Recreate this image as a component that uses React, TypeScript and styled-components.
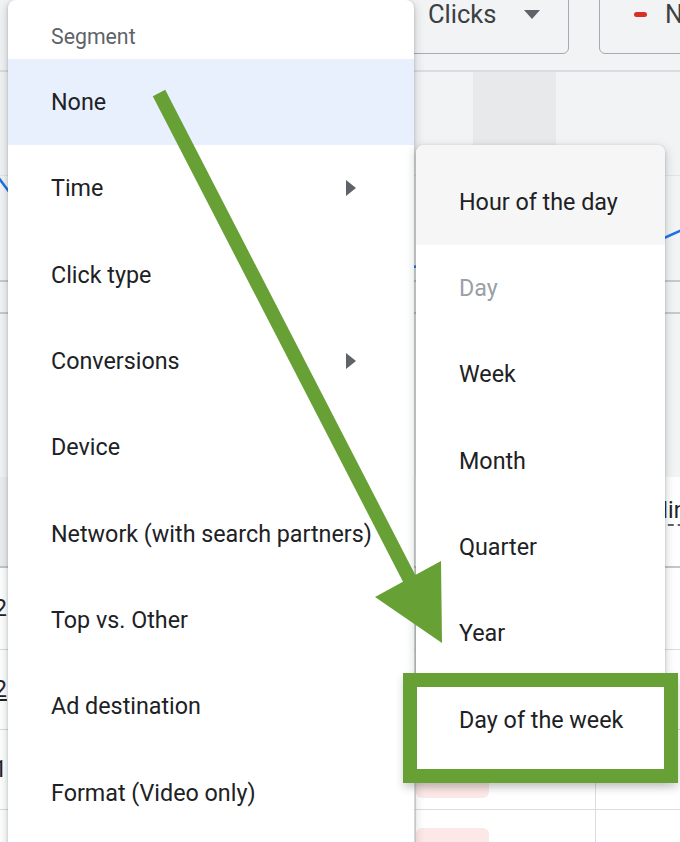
import styled, { createGlobalStyle } from 'styled-components';

const GlobalStyle = createGlobalStyle`
  html, body {
    margin: 0;
    padding: 0;
    background: #ffffff;
  }
  body {
    font-family: Roboto, "Liberation Sans", Arial, sans-serif;
    -webkit-font-smoothing: antialiased;
  }
`;

const GREEN = '#67a035';

const Page = styled.div`
  position: relative;
  width: 680px;
  height: 842px;
  overflow: hidden;
  background: #ffffff;
`;

/* ---------- dashboard behind the menus ---------- */

const Dashboard = styled.div`
  display: flex;
  flex-direction: column;
`;

const Toolbar = styled.div`
  height: 72px;
  box-sizing: border-box;
  background: #f1f3f4;
  border-bottom: 2px solid #dadce0;
  display: flex;
  align-items: flex-end;
  gap: 30px;
  padding: 0 0 16px 399px;
`;

const MetricButton = styled.div`
  flex: none;
  width: ${({ $width }: { $width: number }) => $width}px;
  height: 80px;
  box-sizing: border-box;
  border: 1px solid #a6abb0;
  border-radius: 6px;
  display: flex;
  align-items: center;
  gap: 28px;
  padding: 0 0 0 28px;
  color: #3c4043;
  font-size: 25.5px;
`;

const MetricDash = styled.span`
  width: 13px;
  height: 5px;
  border-radius: 3px;
  background: #d93025;
  margin-left: 6px;
  margin-right: -10px;
`;

const HoverBand = styled.div`
  height: 103px;
  background: #f1f3f4;
  display: flex;
  padding-left: 473px;
`;

const HoverColumn = styled.div`
  width: 83px;
  background: #e8e9eb;
`;

const Chart = styled.svg`
  display: block;
  width: 680px;
  height: 301px;
  background: #f3f4f5;
  border-top: 1px solid #e3e4e6;
`;

const Table = styled.div`
  display: grid;
  grid-template-columns: 415px 180px 1fr;
`;

const HeaderCell = styled.div`
  height: 91px;
  box-sizing: border-box;
  border-bottom: 2px solid #c4c7c9;
  background: ${({ $shaded }: { $shaded?: boolean }) => ($shaded ? '#eceef0' : '#ffffff')};
  display: flex;
  align-items: center;
  padding-bottom: 20px;
  font-size: 23px;
  color: #202124;
  overflow: hidden;
`;

const HeaderLabel = styled.span`
  margin-left: 53px;
  border-bottom: 2px dashed #5f6368;
  white-space: nowrap;
`;

const Cell = styled.div`
  height: ${({ $height }: { $height: number }) => $height}px;
  box-sizing: border-box;
  border-bottom: 1px solid #dadce0;
  border-left: ${({ $divider }: { $divider?: boolean }) => ($divider ? '1px solid #dadce0' : 'none')};
  display: flex;
  align-items: center;
  font-size: 23px;
  color: #202124;
`;

const Count = styled.span`
  margin-left: -6px;
  text-decoration: ${({ $underline }: { $underline?: boolean }) => ($underline ? 'underline' : 'none')};
`;

const Pill = styled.span`
  width: 73px;
  height: 50px;
  margin-top: 6px;
  border-radius: 6px;
  background: #fce8e6;
`;

/* ---------- menus ---------- */

const MainMenu = styled.div`
  position: absolute;
  left: 8px;
  top: 0;
  width: 406px;
  height: 870px;
  background: #ffffff;
  border-radius: 8px 8px 0 0;
  box-shadow: 0 1px 3px rgba(60, 64, 67, 0.3), 0 4px 8px 3px rgba(60, 64, 67, 0.15);
  display: flex;
  flex-direction: column;
`;

const MenuHeader = styled.div`
  height: 59px;
  box-sizing: border-box;
  padding: 25px 0 0 43px;
  line-height: 24px;
  font-size: 21.3px;
  color: #5f6368;
`;

const MenuItem = styled.div`
  flex: none;
  height: ${({ $height = 86.3 }: { $height?: number; $bg?: string; $muted?: boolean; $top?: number }) => $height}px;
  box-sizing: border-box;
  padding: ${({ $top = 0 }) => $top}px 58px 0 43px;
  display: flex;
  align-items: center;
  justify-content: space-between;
  background: ${({ $bg = 'transparent' }) => $bg};
  color: ${({ $muted }) => ($muted ? '#9aa0a6' : '#202124')};
  font-size: 23.3px;
  white-space: nowrap;
`;

const SubMenu = styled.div`
  position: absolute;
  left: 416px;
  top: 145px;
  width: 249px;
  height: 632px;
  background: #ffffff;
  border-radius: 8px 8px 0 0;
  overflow: hidden;
  box-shadow: 0 1px 3px rgba(60, 64, 67, 0.3), 0 4px 8px 3px rgba(60, 64, 67, 0.15);
  display: flex;
  flex-direction: column;
`;

/* ---------- annotations ---------- */

const Highlight = styled.div`
  position: absolute;
  left: 403px;
  top: 673px;
  width: 275px;
  height: 110px;
  box-sizing: border-box;
  border: 14px solid ${GREEN};
  box-shadow: 0 5px 8px rgba(0, 0, 0, 0.18);
`;

const Overlay = styled.svg`
  position: absolute;
  left: 0;
  top: 0;
  pointer-events: none;
`;

function Caret() {
  return (
    <svg width="16" height="9" viewBox="0 0 16 9">
      <path d="M0 0h16L8 9z" fill="#5f6368" />
    </svg>
  );
}

function SubArrow() {
  return (
    <svg width="10" height="16" viewBox="0 0 10 16">
      <path d="M0 0l10 8-10 8z" fill="#5f6368" />
    </svg>
  );
}

const segments = [
  { label: 'Time', sub: true },
  { label: 'Click type' },
  { label: 'Conversions', sub: true },
  { label: 'Device' },
  { label: 'Network (with search partners)' },
  { label: 'Top vs. Other' },
  { label: 'Ad destination' },
  { label: 'Format (Video only)' },
];

const periods = ['Week', 'Month', 'Quarter', 'Year', 'Day of the week'];

const rows = [
  { height: 82, count: '2' },
  { height: 80, count: '2', underline: true },
  { height: 80, count: '1', pill: true },
  { height: 80, count: '', pill: true },
];

export default function App() {
  return (
    <Page>
      <GlobalStyle />
      <Dashboard>
        <Toolbar>
          <MetricButton $width={170}>
            Clicks
            <Caret />
          </MetricButton>
          <MetricButton $width={200}>
            <MetricDash />
            N
          </MetricButton>
        </Toolbar>
        <HoverBand>
          <HoverColumn />
        </HoverBand>
        <Chart viewBox="0 0 680 301">
          <line x1="0" y1="105" x2="680" y2="105" stroke="#b9bcbf" strokeWidth="1.5" />
          <line x1="0" y1="137" x2="680" y2="137" stroke="#b9bcbf" strokeWidth="1.5" />
          <polyline
            points="-2,1 10,17 200,120 420,90 662,63 682,54"
            fill="none"
            stroke="#1a73e8"
            strokeWidth="2.5"
          />
        </Chart>
        <Table>
          <HeaderCell $shaded />
          <HeaderCell />
          <HeaderCell>
            <HeaderLabel>Min. CPC</HeaderLabel>
          </HeaderCell>
          {rows.map((r, i) => [
            <Cell key={`a${i}`} $height={r.height}>
              <Count $underline={r.underline}>{r.count}</Count>
            </Cell>,
            <Cell key={`b${i}`} $height={r.height} $divider>
              {r.pill && <Pill />}
            </Cell>,
            <Cell key={`c${i}`} $height={r.height} $divider />,
          ])}
        </Table>
      </Dashboard>

      <MainMenu>
        <MenuHeader>Segment</MenuHeader>
        <MenuItem $bg="#e8f0fe">None</MenuItem>
        {segments.map((s) => (
          <MenuItem key={s.label}>
            {s.label}
            {s.sub && <SubArrow />}
          </MenuItem>
        ))}
      </MainMenu>

      <SubMenu>
        <MenuItem $height={100} $top={14} $bg="#f6f6f6">
          Hour of the day
        </MenuItem>
        <MenuItem $muted>Day</MenuItem>
        {periods.map((p) => (
          <MenuItem key={p}>{p}</MenuItem>
        ))}
      </SubMenu>

      <Highlight />

      <Overlay width="680" height="842" viewBox="0 0 680 842">
        <line x1="159" y1="93" x2="410" y2="580" stroke={GREEN} strokeWidth="14" />
        <polygon points="375,597 441,561 442,643" fill={GREEN} />
      </Overlay>
    </Page>
  );
}
